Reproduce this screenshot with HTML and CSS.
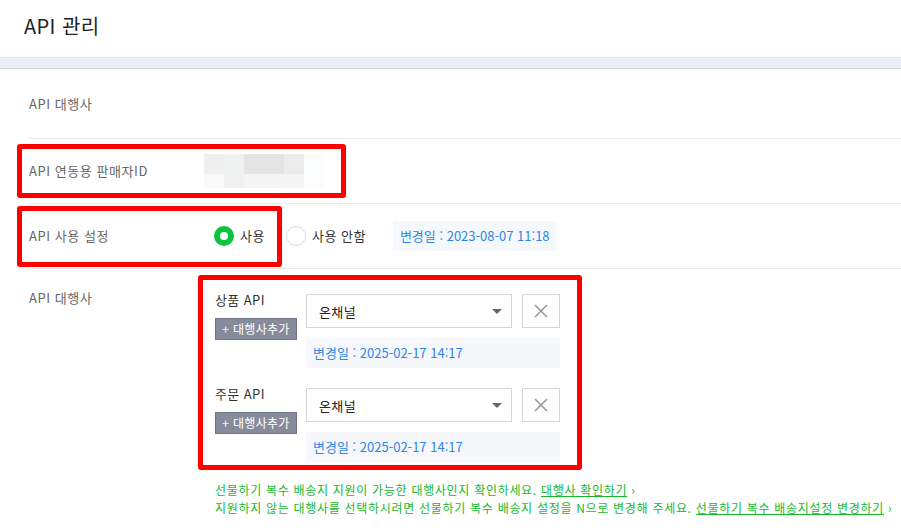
FILE: index.html
```html
<!DOCTYPE html>
<html lang="ko">
<head>
  <meta charset="UTF-8" />
  <title>API 관리</title>
  <link rel="stylesheet" href="styles.css">
</head>
<body>
  <div class="page">
    <header class="page-head">
      <h1>API 관리</h1>
    </header>
    <div class="band"></div>

    <div class="form">
      <div class="row row-first">
        <div class="label">API 대행사</div>
        <div class="value"></div>
      </div>

      <div class="row">
        <div class="label">API 연동용 판매자ID</div>
        <div class="value">
          <div class="seller-id"></div>
        </div>
      </div>

      <div class="row">
        <div class="label">API 사용 설정</div>
        <div class="value radios">
          <label class="radio">
            <span class="radio-dot on"></span>
            <span>사용</span>
          </label>
          <label class="radio radio-off">
            <span class="radio-dot"></span>
            <span>사용 안함</span>
          </label>
          <div class="changed">변경일 : 2023-08-07 11:18</div>
        </div>
      </div>

      <div class="row row-agency">
        <div class="label">API 대행사</div>
        <div class="value agency">
          <div class="agency-group">
            <div class="agency-side">
              <div class="agency-name">상품 API</div>
              <button class="add-btn">+ 대행사추가</button>
            </div>
            <div class="agency-main">
              <div class="select-line">
                <div class="select">온채널</div>
                <button class="del-btn">
                  <svg width="14" height="14" viewBox="0 0 14 14"><path d="M1 1L13 13M13 1L1 13" stroke="#9a9a9a" stroke-width="1.6" fill="none"/></svg>
                </button>
              </div>
              <div class="date-box">변경일 : 2025-02-17 14:17</div>
            </div>
          </div>

          <div class="agency-group">
            <div class="agency-side">
              <div class="agency-name">주문 API</div>
              <button class="add-btn">+ 대행사추가</button>
            </div>
            <div class="agency-main">
              <div class="select-line">
                <div class="select">온채널</div>
                <button class="del-btn">
                  <svg width="14" height="14" viewBox="0 0 14 14"><path d="M1 1L13 13M13 1L1 13" stroke="#9a9a9a" stroke-width="1.6" fill="none"/></svg>
                </button>
              </div>
              <div class="date-box">변경일 : 2025-02-17 14:17</div>
            </div>
          </div>

          <div class="notes">
            <p>선물하기 복수 배송지 지원이 가능한 대행사인지 확인하세요. <a href="#">대행사 확인하기</a> ›</p>
            <p>지원하지 않는 대행사를 선택하시려면 선물하기 복수 배송지 설정을 N으로 변경해 주세요. <a href="#">선물하기 복수 배송지설정 변경하기</a> ›</p>
          </div>
        </div>
      </div>
    </div>

    <div class="mark mark-id"></div>
    <div class="mark mark-use"></div>
    <div class="mark mark-agency"></div>
  </div>
</body>
</html>
```

FILE: styles.css
```css
* {
  margin: 0;
  padding: 0;
  box-sizing: border-box;
}

body {
  font-family: "Noto Sans CJK KR", "Noto Sans", sans-serif;
  color: #333;
  background: #fff;
}

.page {
  position: relative;
  width: 901px;
  height: 531px;
  overflow: hidden;
}

.page-head {
  height: 57px;
  padding: 14px 0 0 24px;
}

.page-head h1 {
  font-size: 20px;
  font-weight: 400;
  line-height: 24px;
  letter-spacing: 0.4px;
  color: #222;
}

.band {
  height: 12px;
  background: #ebeef3;
  border-top: 1px solid #dfe2e8;
  border-bottom: 1px solid #d6d9df;
}

.form {
  padding-left: 29px;
}

.row {
  display: flex;
  align-items: center;
  height: 65px;
  border-bottom: 1px solid #ebebeb;
}

.row-first {
  height: 70px;
}

.label {
  width: 176px;
  flex-shrink: 0;
  font-size: 13px;
  line-height: 18px;
  letter-spacing: 0.55px;
  color: #666;
}

.seller-id {
  width: 120px;
  height: 34px;
  margin-left: -1px;
  background:
    linear-gradient(90deg, #efefef 0 20px, #f0f1f1 20px 40px, #e4e4e4 40px 80px, #ececec 80px 100px, #fbfcfd 100px 120px) top / 120px 20px no-repeat,
    linear-gradient(90deg, #f9f9f9 0 20px, #eff0f2 20px 40px, #f4f4f4 40px 80px, #f5f5f5 80px 100px, #fcfcfc 100px 120px) bottom / 120px 14px no-repeat;
}

/* radios */
.radios {
  display: flex;
  align-items: center;
  padding-left: 9px;
}

.radio {
  display: flex;
  align-items: center;
  gap: 6px;
  font-size: 13px;
  line-height: 18px;
  letter-spacing: 0.5px;
  color: #333;
}

.radio-off {
  margin-left: 21px;
}

.radio-dot {
  width: 20px;
  height: 20px;
  border-radius: 50%;
  border: 1px solid #dcdcdc;
  background: #fff;
}

.radio-dot.on {
  border: 6px solid #0ac43f;
}

.changed {
  margin-left: 27px;
  height: 30px;
  padding: 0 7px;
  background: #f5f8fd;
  font-size: 13px;
  line-height: 30px;
  color: #2f86e8;
}

/* agency */
.row-agency {
  align-items: flex-start;
  height: auto;
  padding-top: 20px;
  border-bottom: 0;
}

.agency {
  padding: 2px 0 0 10px;
}

.agency-group {
  display: flex;
}

.agency-group + .agency-group {
  margin-top: 17px;
}

.agency-side {
  width: 91px;
}

.agency-name {
  font-size: 13px;
  line-height: 18px;
  letter-spacing: 0.4px;
  color: #333;
}

.add-btn {
  display: block;
  margin-top: 9px;
  width: 82px;
  height: 22px;
  background: #878c9c;
  border: 1px solid #6f7486;
  color: #fff;
  font-family: inherit;
  font-size: 12px;
  line-height: 18px;
  letter-spacing: 0.3px;
}

.agency-main {
  width: 254px;
  margin-top: 3px;
}

.select-line {
  display: flex;
  gap: 10px;
}

.select {
  display: flex;
  align-items: center;
  justify-content: space-between;
  width: 206px;
  height: 34px;
  padding: 0 9px 0 12px;
  border: 1px solid #d6d6d6;
  font-size: 13px;
  letter-spacing: 0.4px;
  color: #222;
}

.select::after {
  content: '';
  border-top: 5px solid #666;
  border-left: 5px solid transparent;
  border-right: 5px solid transparent;
}

.del-btn {
  display: flex;
  align-items: center;
  justify-content: center;
  width: 38px;
  height: 34px;
  background: #fff;
  border: 1px solid #d6d6d6;
}

.date-box {
  margin-top: 10px;
  height: 30px;
  padding-left: 7px;
  background: #f5f7fb;
  font-size: 13px;
  line-height: 30px;
  color: #2f86e8;
}

.notes {
  margin-top: 19px;
  font-size: 12px;
  line-height: 18px;
  letter-spacing: 0.7px;
  color: #17b92c;
  white-space: nowrap;
}

.notes a {
  color: #17b92c;
  text-decoration: underline;
}

/* red highlight boxes */
.mark {
  position: absolute;
  border: 5px solid #ff0000;
  border-radius: 3px;
  pointer-events: none;
}

.mark-id {
  left: 17px;
  top: 144px;
  width: 329px;
  height: 54px;
}

.mark-use {
  left: 17px;
  top: 206px;
  width: 265px;
  height: 61px;
}

.mark-agency {
  left: 198px;
  top: 275px;
  width: 384px;
  height: 195px;
}
```
